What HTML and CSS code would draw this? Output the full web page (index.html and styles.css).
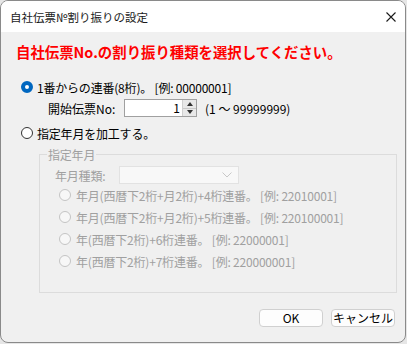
FILE: index.html
```html
<!DOCTYPE html>
<html lang="ja">
<head>
    <meta charset="UTF-8">
    <title>自社伝票№割り振りの設定</title>
    <link rel="stylesheet" href="styles.css">
</head>
<body>
    <div class="window">
        <div class="titlebar">
            <span class="title">自社伝票№割り振りの設定</span>
            <svg class="close" width="10" height="10" viewBox="0 0 10 10">
                <path d="M0.5 0.5 L9.5 9.5 M9.5 0.5 L0.5 9.5" stroke="#1a1a1a" stroke-width="1.1" fill="none"/>
            </svg>
        </div>

        <div class="content">
            <h1 class="heading">自社伝票No.の割り振り種類を選択してください。</h1>

            <div class="radio-row first">
                <span class="radio checked"></span>
                <span>1番からの連番(8桁)。 [例: 00000001]</span>
            </div>

            <div class="start-row">
                <span class="start-label">開始伝票No:</span>
                <div class="spin">
                    <div class="spin-value">1</div>
                    <div class="spin-buttons">
                        <span class="arrow up"></span>
                        <span class="arrow down"></span>
                    </div>
                </div>
                <span class="range">(1 ～ 99999999)</span>
            </div>

            <div class="radio-row second">
                <span class="radio"></span>
                <span>指定年月を加工する。</span>
            </div>

            <fieldset class="group">
                <legend>指定年月</legend>
                <div class="combo-row">
                    <span class="combo-label">年月種類:</span>
                    <div class="combo">
                        <svg width="10" height="6" viewBox="0 0 10 6">
                            <path d="M0.5 0.5 L5 5 L9.5 0.5" stroke="#c8c8c8" fill="none"/>
                        </svg>
                    </div>
                </div>
                <div class="option"><span class="radio disabled"></span><span>年月(西暦下2桁+月2桁)+4桁連番。 [例: 22010001]</span></div>
                <div class="option"><span class="radio disabled"></span><span>年月(西暦下2桁+月2桁)+5桁連番。 [例: 220100001]</span></div>
                <div class="option"><span class="radio disabled"></span><span>年(西暦下2桁)+6桁連番。 [例: 22000001]</span></div>
                <div class="option"><span class="radio disabled"></span><span>年(西暦下2桁)+7桁連番。 [例: 220000001]</span></div>
            </fieldset>

            <div class="buttons">
                <button class="btn">OK</button>
                <button class="btn">キャンセル</button>
            </div>
        </div>
    </div>
</body>
</html>
```

FILE: styles.css
```css
body {
    margin: 0;
    background-color: #e6e6e6;
    font-family: 'Noto Sans CJK JP', sans-serif;
    font-size: 12px;
    color: #000;
}
.window {
    width: 404px;
    height: 341px;
    border: 1px solid #8a8a8a;
    border-radius: 8px;
    background-color: #f0f0f0;
    overflow: hidden;
    display: flex;
    flex-direction: column;
}
.titlebar {
    height: 31px;
    background-color: #fff;
    display: flex;
    align-items: center;
    justify-content: space-between;
    padding: 0 9px 0 9px;
    box-sizing: border-box;
}
.title {
    font-size: 11.5px;
    color: #1a1a1a;
}
.content {
    display: flex;
    flex-direction: column;
    padding: 0 0 0 15px;
}
.heading {
    margin: 10px 0 0 0;
    font-size: 14.4px;
    line-height: 20px;
    color: #ff0000;
    font-weight: bold;
}
.radio-row {
    display: flex;
    align-items: center;
    gap: 4px;
    height: 18px;
    padding-left: 5px;
    letter-spacing: -0.2px;
}
.radio-row.first {
    margin-top: 16px;
}
.radio-row.second {
    margin-top: 7px;
}
.radio {
    width: 12px;
    height: 12px;
    box-sizing: border-box;
    border: 1px solid #333;
    border-radius: 50%;
    background-color: #fff;
    flex-shrink: 0;
}
.radio.checked {
    border: 4px solid #0067c0;
    background-color: #fff;
}
.radio.disabled {
    border-color: #c4c4c4;
    background-color: #f7f7f7;
}
.start-row {
    display: flex;
    align-items: center;
    margin-top: 3px;
    padding-left: 32px;
    height: 18px;
}
.start-label {
    width: 76px;
}
.spin {
    display: flex;
    width: 73px;
    height: 18px;
    box-sizing: border-box;
    border: 1px solid #a0a0a0;
    background-color: #fff;
}
.spin-value {
    flex: 1;
    text-align: right;
    line-height: 16px;
    padding-right: 2px;
}
.spin-buttons {
    width: 13px;
    display: flex;
    flex-direction: column;
    border-left: 1px solid #d0d0d0;
    background-color: #e8e8e8;
}
.arrow {
    flex: 1;
    display: flex;
    align-items: center;
    justify-content: center;
}
.arrow::after {
    content: "";
    border-left: 3px solid transparent;
    border-right: 3px solid transparent;
}
.arrow.up {
    border-bottom: 1px solid #c8c8c8;
}
.arrow.up::after {
    border-bottom: 4px solid #333;
}
.arrow.down::after {
    border-top: 4px solid #333;
}
.range {
    margin-left: 8px;
}
.group {
    margin: 4px 0 0 23px;
    width: 358px;
    height: 147px;
    box-sizing: border-box;
    border: 1px solid #dcdcdc;
    padding: 3px 0 0 15px;
    color: #a0a0a0;
    letter-spacing: -0.2px;
}
.group legend {
    padding: 0 1px;
    margin-left: -8px;
    font-size: 12px;
}
.combo-row {
    display: flex;
    align-items: center;
}
.combo-label {
    width: 64px;
}
.combo {
    width: 120px;
    height: 18px;
    box-sizing: border-box;
    border: 1px solid #e2e2e2;
    background-color: #f8f8f8;
    display: flex;
    align-items: center;
    justify-content: flex-end;
    padding-right: 6px;
}
.option {
    display: flex;
    align-items: center;
    gap: 5px;
    height: 22px;
    padding-left: 4px;
}
.option:first-of-type {
    margin-top: 11px;
}
.buttons {
    display: flex;
    justify-content: flex-end;
    gap: 8px;
    margin-top: 16px;
    padding-right: 10px;
}
.btn {
    width: 64px;
    height: 18px;
    padding: 0;
    border: 1px solid #d0d0d0;
    border-radius: 4px;
    background-color: #fdfdfd;
    font-family: 'Noto Sans CJK JP', sans-serif;
    font-size: 12px;
    line-height: 16px;
    color: #000;
}
```
